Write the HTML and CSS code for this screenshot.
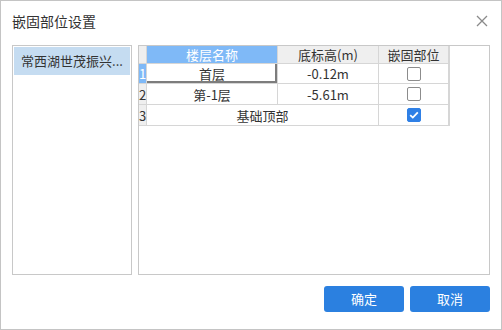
FILE: index.html
```html
<!DOCTYPE html>
<html lang="zh">
<head>
<meta charset="utf-8">
<link rel="stylesheet" href="styles.css">
</head>
<body>
<div class="window">
  <div class="titlebar">
    <span class="title">嵌固部位设置</span>
    <svg class="close" width="12" height="12" viewBox="0 0 12 12"><path d="M1 1L11 11M11 1L1 11" stroke="#8a8a8a" stroke-width="1.3" fill="none"/></svg>
  </div>
  <div class="content">
    <div class="list">
      <div class="item">常西湖世茂振兴...</div>
    </div>
    <div class="tablepanel">
      <div class="grid">
        <div class="c rh"></div>
        <div class="c hd sel">楼层名称</div>
        <div class="c hd">底标高(m)</div>
        <div class="c hd">嵌固部位</div>

        <div class="c rh rsel">1</div>
        <div class="c cur">首层</div>
        <div class="c">-0.12m</div>
        <div class="c"><span class="cb"></span></div>

        <div class="c rh">2</div>
        <div class="c">第-1层</div>
        <div class="c">-5.61m</div>
        <div class="c"><span class="cb"></span></div>

        <div class="c rh">3</div>
        <div class="c span2">基础顶部</div>
        <div class="c"><span class="cb on"><svg width="10" height="8" viewBox="0 0 10 8"><path d="M1.2 4.2L3.8 6.6L8.8 1.4" stroke="#fff" stroke-width="1.8" fill="none"/></svg></span></div>
      </div>
    </div>
  </div>
  <div class="footer">
    <button class="btn">确定</button>
    <button class="btn">取消</button>
  </div>
</div>
</body>
</html>
```

FILE: styles.css
```css
* { box-sizing: border-box; }
html, body { margin: 0; padding: 0; background: #fff; }
body { font-family: "Noto Sans CJK SC", "Microsoft YaHei", sans-serif; color: #333; }
.window {
  width: 502px; height: 330px;
  border: 1px solid #c4c4c4;
  display: flex; flex-direction: column;
}
.titlebar {
  height: 44px;
  display: flex; align-items: center; justify-content: space-between;
  padding: 0 12px 4px 11px;
}
.title { font-size: 14px; color: #333; line-height: 20px; }
.close { margin-right: 1px; }
.content {
  height: 230px;
  display: flex; gap: 6px;
  padding-left: 11px;
}
.list {
  width: 120px; height: 230px;
  border: 1px solid #c8c8c8;
  padding: 1px;
}
.item {
  height: 28px;
  background: #c5dcf1;
  font-size: 13px; line-height: 28px;
  text-align: center; color: #333;
}
.tablepanel {
  width: 352px; height: 230px;
  border: 1px solid #c8c8c8;
}
.grid {
  display: grid;
  grid-template-columns: 7px 130px 100px 69px;
  grid-template-rows: 17px 19px 20px 20px;
  gap: 1px;
  background: #d6d6d6;
  width: 311px;
  border-right: 1px solid #d6d6d6;
  border-bottom: 1px solid #d6d6d6;
  font-size: 13px;
}
.c {
  background: #fff;
  display: flex; align-items: center; justify-content: center;
  color: #333;
  line-height: 1;
  white-space: nowrap;
}
.hd { background: #efefef; }
.hd.sel { background: #7fb9f7; color: #fff; }
.rh { background: #efefef; justify-content: flex-start; padding-left: 0; font-size: 13px; }
.rh.rsel { background: #7fb9f7; color: #fff; }
.cur { box-shadow: inset -2px -2px 0 #7d7d7d; }
.span2 { grid-column: span 2; }
.cb {
  width: 14px; height: 14px;
  border: 1px solid #8c8c8c; border-radius: 2px;
  background: #fff;
  display: flex; align-items: center; justify-content: center;
}
.cb.on { background: #2f80e6; border-color: #2f80e6; }
.footer {
  display: flex; justify-content: flex-end; gap: 6px;
  padding: 11px 11px 0 0;
}
.btn {
  width: 80px; height: 26px;
  border: none; border-radius: 3px;
  background: #2b80e0; color: #fff;
  font-family: "Noto Sans CJK SC", sans-serif; font-size: 13px;
  padding: 0; line-height: 26px;
}
```
